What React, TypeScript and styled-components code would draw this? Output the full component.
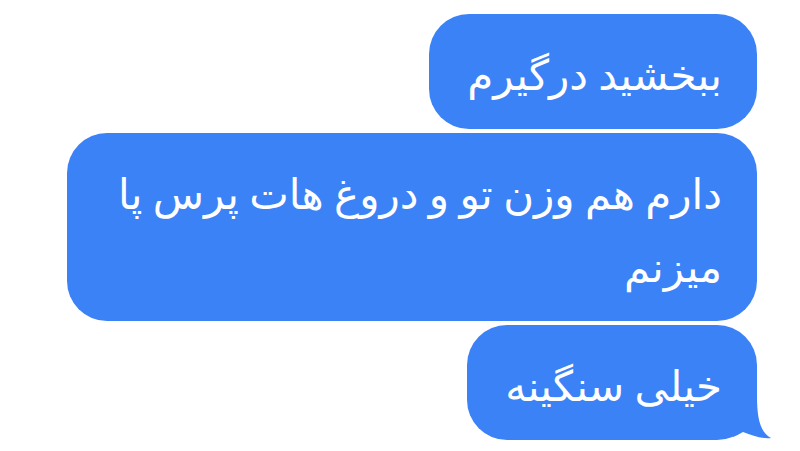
import React from "react";
import styled, { createGlobalStyle } from "styled-components";

const Global = createGlobalStyle`
  html, body { margin: 0; padding: 0; background: #ffffff; }
  body { width: 800px; height: 451px; overflow: hidden; }
`;

const Thread = styled.div`
  box-sizing: border-box;
  width: 800px;
  height: 451px;
  padding: 14px 43px 0 0;
  display: flex;
  flex-direction: column;
  align-items: flex-end;
  gap: 4px;
  background: #ffffff;
  font-family: "DejaVu Sans", "Noto Sans Arabic", sans-serif;
`;

const Bubble = styled.div`
  position: relative;
  box-sizing: border-box;
  max-width: 690px;
  padding: 25px 35px 17px 38px;
  background: #3b82f6;
  color: #ffffff;
  border-radius: 40px;
  font-size: 42px;
  line-height: 73px;
  word-spacing: -3px;
  direction: rtl;
  text-align: right;
`;

const Tail = styled.svg`
  position: absolute;
  right: -16px;
  bottom: 0;
  width: 40px;
  height: 44px;
`;

export default function App() {
  return (
    <>
      <Global />
      <Thread>
        <Bubble>ببخشید درگیرم</Bubble>
        <Bubble>دارم هم وزن تو و دروغ هات پرس پا میزنم</Bubble>
        <Bubble>
          خیلی سنگینه
          <Tail viewBox="0 0 40 44">
            <path d="M0 0 H24 C24 22 27 36 38 42 C30 43 20 40 10 36 C6 38 3 40 0 41 Z" fill="#3b82f6" />
          </Tail>
        </Bubble>
      </Thread>
    </>
  );
}
